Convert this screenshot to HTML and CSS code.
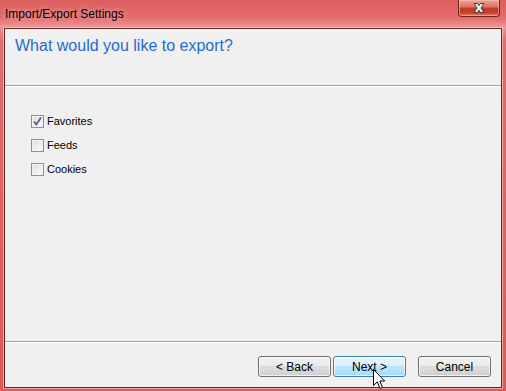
FILE: index.html
```html
<!DOCTYPE html>
<html lang="en">
<head>
    <meta charset="UTF-8" />
    <title>Import/Export Settings</title>
    <link rel="stylesheet" href="styles.css">
</head>
<body>
    <div class="window">
        <div class="titlebar">
            <span class="title">Import/Export Settings</span>
            <div class="close-btn">
                <svg width="18" height="12" viewBox="0 0 18 12">
                    <path d="M4 1.5 L7.5 1.5 L9 3.8 L10.5 1.5 L14 1.5 L11 6 L14 10.5 L10.5 10.5 L9 8.2 L7.5 10.5 L4 10.5 L7 6 Z" fill="#f4f4f4" stroke="#3a3a4a" stroke-width="1"/>
                </svg>
            </div>
        </div>
        <div class="client">
            <div class="wizard-header">
                <h1>What would you like to export?</h1>
            </div>
            <div class="wizard-body">
                <label class="option">
                    <span class="checkbox checked">
                        <svg width="11" height="11" viewBox="0 0 11 11">
                            <path d="M2 5.5 L4.3 8.5 L9 1.5" fill="none" stroke="#4a5f97" stroke-width="1.8"/>
                        </svg>
                    </span>
                    Favorites
                </label>
                <label class="option">
                    <span class="checkbox"></span>
                    Feeds
                </label>
                <label class="option">
                    <span class="checkbox"></span>
                    Cookies
                </label>
            </div>
            <div class="wizard-footer">
                <button class="btn">&lt; Back</button>
                <button class="btn btn-hover">Next &gt;</button>
                <button class="btn btn-cancel">Cancel</button>
            </div>
        </div>
        <svg class="cursor" width="14" height="22" viewBox="0 0 14 22">
            <path d="M0.5 0.5 L0.5 16.5 L4.3 12.8 L7 19.5 L9.5 18.5 L6.8 12 L11.7 12 Z" fill="#fff" stroke="#000" stroke-width="1"/>
        </svg>
    </div>
</body>
</html>
```

FILE: styles.css
```css
html, body {
    margin: 0;
    height: 100%;
}
body {
    font-family: 'Liberation Sans', Arial, sans-serif;
    background: linear-gradient(180deg, #dd5f5f 0%, #e36d6d 5%, #e06565 40%, #dc5a52 100%);
}
.window {
    position: relative;
    height: 391px;
    box-sizing: border-box;
    padding: 0 4px 3px 4px;
    display: flex;
    flex-direction: column;
    background: linear-gradient(180deg, rgba(255,255,255,0) 0px, rgba(255,255,255,0) 18px, rgba(255,230,230,0.35) 27px, rgba(255,255,255,0) 40px);
}
.titlebar {
    height: 28px;
    display: flex;
    justify-content: space-between;
    align-items: flex-start;
    flex-shrink: 0;
}
.title {
    font-size: 12px;
    color: #000;
    margin-top: 7px;
    margin-left: 1px;
    text-shadow: 0 0 6px rgba(255, 255, 255, 0.6);
}
.close-btn {
    width: 42px;
    height: 17px;
    margin-right: 2px;
    box-sizing: border-box;
    border: 1px solid #6e2620;
    border-top: none;
    border-radius: 0 0 4px 4px;
    background: linear-gradient(180deg, #e8a595 0%, #d8786a 40%, #c5361f 55%, #c9402a 80%, #e0806a 100%);
    box-shadow: inset 0 0 0 1px rgba(255, 200, 190, 0.5);
    display: flex;
    justify-content: center;
    align-items: center;
}
.client {
    flex: 1;
    display: flex;
    flex-direction: column;
    background: #f0f0f0;
    border: 1px solid #5a2525;
    box-shadow: 0 0 0 1px rgba(255, 220, 220, 0.6);
}
.wizard-header {
    height: 57px;
    box-sizing: border-box;
    padding: 7px 10px 0;
    border-bottom: 1px solid #a0a0a0;
    box-shadow: 0 1px 0 #fff;
}
h1 {
    margin: 0;
    font-size: 16px;
    line-height: 19px;
    font-weight: normal;
    color: #1e6ccc;
}
.wizard-body {
    flex: 1;
    padding: 23px 26px 0;
}
.option {
    display: flex;
    align-items: center;
    height: 24px;
    font-size: 11px;
    color: #000;
}
.checkbox {
    width: 13px;
    height: 13px;
    box-sizing: border-box;
    margin-right: 3px;
    border: 1px solid #8e8f8f;
    background: linear-gradient(135deg, #dcdcdc 0%, #f0f0f0 60%, #fbfbfb 100%);
    box-shadow: inset 0 0 0 1px #f4f4f4;
    display: flex;
    justify-content: center;
    align-items: center;
}
.wizard-footer {
    height: 46px;
    box-sizing: border-box;
    border-top: 1px solid #a0a0a0;
    box-shadow: inset 0 1px 0 #fff;
    display: flex;
    justify-content: flex-end;
    align-items: flex-start;
    padding: 14px 10px 0;
    gap: 2px;
}
.btn {
    width: 73px;
    height: 21px;
    margin: 0;
    padding: 0;
    font-family: 'Liberation Sans', Arial, sans-serif;
    font-size: 12px;
    color: #000;
    border: 1px solid #707070;
    border-radius: 3px;
    background: linear-gradient(180deg, #f2f2f2 0%, #ebebeb 45%, #dddddd 50%, #cfcfcf 100%);
    box-shadow: inset 0 0 0 1px rgba(255, 255, 255, 0.7);
}
.btn-hover {
    border-color: #3c7fb1;
    background: linear-gradient(180deg, #eaf6fd 0%, #d9f0fc 45%, #bee6fd 50%, #a7d9f5 100%);
}
.btn-cancel {
    margin-left: 10px;
}
.cursor {
    position: absolute;
    left: 373px;
    top: 369px;
}
```
